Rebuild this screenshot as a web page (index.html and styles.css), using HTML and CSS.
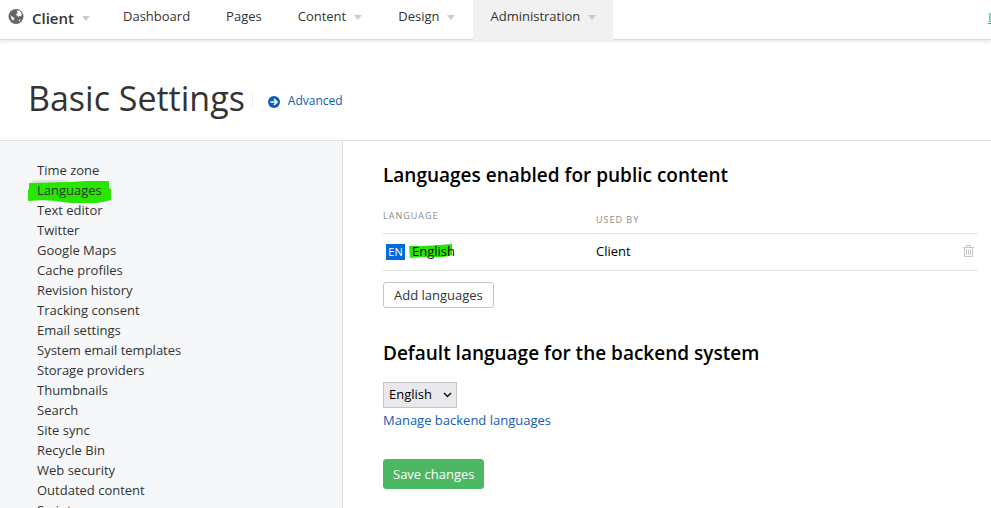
FILE: index.html
```html
<!DOCTYPE html>
<html lang="en">
<head>
<meta charset="utf-8">
<title>Basic Settings</title>
<link rel="stylesheet" href="styles.css">
</head>
<body>
<header class="topbar">
  <a class="site" href="#">
    <svg class="globe" viewBox="0 0 16 16" aria-hidden="true">
      <circle cx="8" cy="8.5" r="7.5" fill="#666"/>
      <path fill="#fff" d="M9 2.4 11.4 2.8 13.2 4.4 13.8 6.4 12.8 8.4 11.6 7.8 10.4 9 9 7.6 8 7 8.8 5.6 10 4.8 9 4ZM2.2 6.4 3.4 8.2 5 9 6.4 10.2 6 11.6 5 12.6 3.8 11.4 3.2 9.6ZM10.8 12 12.2 11.4 12.4 12.4 11 13.4Z"/>
    </svg>
    <span class="site-name">Client</span>
    <span class="caret"></span>
  </a>
  <nav class="menu">
    <a href="#">Dashboard</a>
    <a href="#">Pages</a>
    <a href="#">Content<span class="caret"></span></a>
    <a href="#">Design<span class="caret"></span></a>
    <a class="current" href="#">Administration<span class="caret"></span></a>
  </nav>
  <a class="side-link" href="#">L</a>
</header>
<div class="title-row">
  <h1>Basic Settings</h1>
  <a class="advanced" href="#">
    <svg class="arrow" viewBox="0 0 12 12" aria-hidden="true">
      <circle cx="6" cy="6" r="6" fill="#105cb6"/>
      <path d="M2.4 6H9M6 3l3 3-3 3" fill="none" stroke="#fff" stroke-width="1.7"/>
    </svg>
    Advanced
  </a>
</div>
<div class="columns">
  <nav class="sidebar">
    <ul>
      <li><a href="#">Time zone</a></li>
      <li class="marked">
        <svg class="marker" viewBox="0 0 84 24" aria-hidden="true"><path fill="#e2e2e2" d="M6 0Q4 0 4 3H40V0Z"/><path fill="#28e600" d="M1 3 40 2 60 1H81V8L83 9V20L75 22 68 23H42L28 21 14 20 0 21V10L1 9Z"/></svg>
        <a href="#">Languages</a>
      </li>
      <li><a href="#">Text editor</a></li>
      <li><a href="#">Twitter</a></li>
      <li><a href="#">Google Maps</a></li>
      <li><a href="#">Cache profiles</a></li>
      <li><a href="#">Revision history</a></li>
      <li><a href="#">Tracking consent</a></li>
      <li><a href="#">Email settings</a></li>
      <li><a href="#">System email templates</a></li>
      <li><a href="#">Storage providers</a></li>
      <li><a href="#">Thumbnails</a></li>
      <li><a href="#">Search</a></li>
      <li><a href="#">Site sync</a></li>
      <li><a href="#">Recycle Bin</a></li>
      <li><a href="#">Web security</a></li>
      <li><a href="#">Outdated content</a></li>
      <li><a href="#">Scripts</a></li>
    </ul>
  </nav>
  <main>
    <h2>Languages enabled for public content</h2>
    <table>
      <thead>
        <tr><th class="col-language">Language</th><th class="col-used">Used by</th><th class="col-action"></th></tr>
      </thead>
      <tbody>
        <tr>
          <td class="language"><span class="code">EN</span><span class="name"><svg class="stroke" viewBox="0 0 44 14" aria-hidden="true"><path fill="#28e600" d="M0 2 14 2 30 1 43 0V10L44 11 34 13H12L1 14Z"/></svg><span class="label">English</span></span></td>
          <td>Client</td>
          <td class="action"><button class="delete" type="button" aria-label="Delete"><svg viewBox="0 0 11 12" aria-hidden="true"><path d="M0 2.5H11M3.5 2V.5H7.5V2M1.5 3V11.5H9.5V3M3.5 4.5V10M5.5 4.5V10M7.5 4.5V10" fill="none" stroke="#c9c3cb"/></svg></button></td>
        </tr>
      </tbody>
    </table>
    <button class="button" type="button">Add languages</button>
    <h2 class="second"><label for="backend">Default language for the backend system</label></h2>
    <div class="select-wrap">
      <select id="backend"><option>English</option></select>
      <svg class="chevron" viewBox="0 0 8 6" aria-hidden="true"><path d="M.5 1 4 4.5 7.5 1" fill="none" stroke="#111" stroke-width="1.5"/></svg>
    </div>
    <a class="manage" href="#">Manage backend languages</a>
    <button class="button save" type="button">Save changes</button>
  </main>
</div>
</body>
</html>
```
FILE: styles.css
```css
* { box-sizing: border-box; }
html { height: 100%; overflow: hidden; }
body {
  display: flex;
  flex-direction: column;
  height: 100%;
  margin: 0;
  overflow: hidden;
  background: #fff;
  color: #333;
  font: 13px/20px "Open Sans", "Noto Sans", sans-serif;
}
a { color: inherit; text-decoration: none; }
button, select { font: inherit; }

.topbar {
  display: flex;
  flex: none;
  height: 40px;
  border-bottom: 1px solid #dcdcdc;
  box-shadow: 0 1px 4px rgba(0, 0, 0, 0.12);
}
.site {
  display: flex;
  flex: none;
  width: 105px;
  padding: 8px 0 0 8px;
}
.globe { width: 16px; height: 16px; }
.site-name { margin-left: 8px; font-size: 15px; font-weight: 600; }
.caret {
  display: inline-block;
  margin-left: 8px;
  border: 4px solid transparent;
  border-top: 5px solid #ccc;
  border-bottom: 0;
  vertical-align: middle;
}
.site .caret { margin-top: 8px; height: 5px; }
.menu { display: flex; flex: 1; }
.menu a { height: 40px; padding: 6px 18px 0; white-space: nowrap; }
.menu .current { padding: 6px 17px 0; background: #f1f1f1; }
.side-link { width: 3px; padding-top: 7px; color: #38ab63; text-decoration: underline; }

.title-row {
  display: flex;
  flex: none;
  height: 101px;
  padding: 34px 28px 0;
  border-bottom: 1px solid #e0e0e0;
}
h1 { margin: 0; font-size: 34px; font-weight: 400; line-height: 48px; }
.advanced {
  display: flex;
  align-items: center;
  height: 14px;
  margin: 20px 0 0 7px;
  padding-left: 15px;
  border-left: 1px solid #eee;
  color: #105cb6;
  font-size: 12px;
}
.arrow { width: 12px; height: 12px; margin: 2px 8px 0 0; }

.columns { display: flex; flex: 1; min-height: 0; }
.sidebar {
  flex: none;
  width: 343px;
  padding: 19px 37px 0;
  overflow: hidden;
  border-right: 1px solid #ddd;
  background: #f5f7f9;
}
.sidebar ul { margin: 0; padding: 0; list-style: none; }
.marked { position: relative; }
.marked a { position: relative; }
.marker { position: absolute; top: 0; left: -9px; width: 84px; height: 24px; }

main { flex: 1; min-width: 0; padding: 20px 13px 0 40px; color: #000; }
h2 { margin: 0; font-size: 19px; font-weight: 600; line-height: 28px; }
table { width: 100%; margin-top: 21px; border-collapse: collapse; table-layout: fixed; }
th {
  height: 23px;
  padding: 0;
  border-bottom: 1px solid #e0e0e0;
  color: #888;
  font-size: 9px;
  font-weight: 400;
  letter-spacing: 1px;
  line-height: 12px;
  text-align: left;
  text-transform: uppercase;
  vertical-align: top;
}
.col-language { width: 213px; }
.col-used { padding-top: 4px; }
.col-action { width: 24px; }
td { height: 37px; padding: 0 0 2px; border-bottom: 1px solid #e0e0e0; }
.code {
  display: inline-block;
  width: 19px;
  margin: 0 7px 0 3px;
  background: #006bdb;
  color: #fff;
  font-size: 11px;
  line-height: 16px;
  text-align: center;
}
.name, .label { position: relative; }
.stroke { position: absolute; top: 2px; left: -3px; width: 44px; height: 14px; }
.delete { display: block; margin-left: 9px; padding: 0; border: 0; background: none; }
.delete svg { display: block; width: 11px; height: 12px; }
.button {
  display: block;
  margin-top: 11px;
  padding: 2px 10px;
  border: 1px solid #c5c5c5;
  border-radius: 3px;
  background: #fff;
  color: #333;
}
.second { margin-top: 31px; }
.select-wrap { position: relative; width: max-content; margin-top: 15px; }
select {
  display: block;
  width: 74px;
  height: 26px;
  padding: 0 5px 2px;
  border: 1px solid #c5c5c5;
  border-radius: 0;
  background: #e9e9ed;
  color: #000;
  appearance: none;
}
.chevron { position: absolute; top: 10px; right: 5px; width: 9px; height: 6px; pointer-events: none; }
.manage { display: block; width: max-content; margin-top: 2px; color: #105cb6; }
.save { margin-top: 29px; padding: 4px 9px; border-color: #4db863; background: #4db863; color: #fff; }
```
